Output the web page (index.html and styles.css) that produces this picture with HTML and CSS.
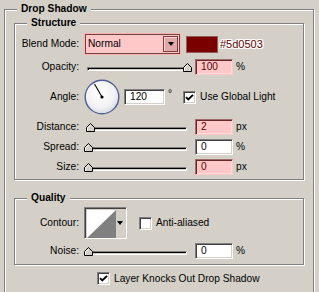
FILE: index.html
```html
<!DOCTYPE html>
<html>
<head>
<meta charset="utf-8">
<link rel="stylesheet" href="styles.css">
</head>
<body>
<div class="page">
  <div class="group outer">
    <span class="legend">Drop Shadow</span>

    <div class="group sub structure">
      <span class="legend">Structure</span>

      <div class="row row-blend">
        <span class="lbl">Blend Mode:</span>
        <div class="select">
          <span class="select-text">Normal</span>
          <span class="select-btn"><i class="arrow"></i></span>
        </div>
        <span class="swatch"></span>
        <span class="hex">#5d0503</span>
      </div>

      <div class="row">
        <span class="lbl">Opacity:</span>
        <div class="slider">
          <div class="track"></div>
          <svg class="thumb" style="left:99px" width="9" height="9" viewBox="0 0 9 9"><path d="M0.5 8.5V4.5L4.5 0.5L8.5 4.5V8.5Z" fill="#d4d0c8" stroke="#000"/><path d="M1.5 8V4.9L4.5 1.9" fill="none" stroke="#fff"/></svg>
        </div>
        <span class="field pink">100</span>
        <span class="unit">%</span>
      </div>

      <div class="row row-angle">
        <span class="lbl">Angle:</span>
        <svg class="dial" width="36" height="36" viewBox="0 0 36 36">
          <defs>
            <radialGradient id="dg" cx="0.45" cy="0.4" r="0.6">
              <stop offset="0" stop-color="#ffffff"/>
              <stop offset="0.7" stop-color="#f2f2f4"/>
              <stop offset="1" stop-color="#d8dae4"/>
            </radialGradient>
          </defs>
          <circle cx="18" cy="18" r="16.8" fill="url(#dg)" stroke="#4d5f94" stroke-width="1.4"/>
          <line x1="18" y1="18" x2="10.5" y2="5" stroke="#000" stroke-width="1.1"/>
          <circle cx="18" cy="18" r="1.6" fill="#000"/>
        </svg>
        <span class="field wide">120</span>
        <span class="deg">°</span>
        <label class="check global">
          <span class="box"><svg width="9" height="9" viewBox="0 0 9 9"><path d="M1 4.2L3.3 6.5L8 1.8" fill="none" stroke="#000" stroke-width="1.9"/></svg></span>
          <span>Use Global Light</span>
        </label>
      </div>

      <div class="row">
        <span class="lbl">Distance:</span>
        <div class="slider">
          <div class="track"></div>
          <svg class="thumb" style="left:2px" width="9" height="9" viewBox="0 0 9 9"><path d="M0.5 8.5V4.5L4.5 0.5L8.5 4.5V8.5Z" fill="#d4d0c8" stroke="#000"/><path d="M1.5 8V4.9L4.5 1.9" fill="none" stroke="#fff"/></svg>
        </div>
        <span class="field pink">2</span>
        <span class="unit">px</span>
      </div>

      <div class="row">
        <span class="lbl">Spread:</span>
        <div class="slider">
          <div class="track"></div>
          <svg class="thumb" style="left:0px" width="9" height="9" viewBox="0 0 9 9"><path d="M0.5 8.5V4.5L4.5 0.5L8.5 4.5V8.5Z" fill="#d4d0c8" stroke="#000"/><path d="M1.5 8V4.9L4.5 1.9" fill="none" stroke="#fff"/></svg>
        </div>
        <span class="field">0</span>
        <span class="unit">%</span>
      </div>

      <div class="row">
        <span class="lbl">Size:</span>
        <div class="slider">
          <div class="track"></div>
          <svg class="thumb" style="left:0px" width="9" height="9" viewBox="0 0 9 9"><path d="M0.5 8.5V4.5L4.5 0.5L8.5 4.5V8.5Z" fill="#d4d0c8" stroke="#000"/><path d="M1.5 8V4.9L4.5 1.9" fill="none" stroke="#fff"/></svg>
        </div>
        <span class="field pink">0</span>
        <span class="unit">px</span>
      </div>
    </div>

    <div class="group sub quality">
      <span class="legend">Quality</span>

      <div class="row row-contour">
        <span class="lbl">Contour:</span>
        <div class="contour">
          <svg class="curve" width="29" height="28" viewBox="0 0 29 28"><rect width="29" height="28" fill="#fff"/><path d="M0 28L29 0V28Z" fill="#808080"/></svg>
          <span class="contour-btn"><i class="arrow"></i></span>
        </div>
        <label class="check anti">
          <span class="box"></span>
          <span>Anti-aliased</span>
        </label>
      </div>

      <div class="row">
        <span class="lbl">Noise:</span>
        <div class="slider">
          <div class="track"></div>
          <svg class="thumb" style="left:0px" width="9" height="9" viewBox="0 0 9 9"><path d="M0.5 8.5V4.5L4.5 0.5L8.5 4.5V8.5Z" fill="#d4d0c8" stroke="#000"/><path d="M1.5 8V4.9L4.5 1.9" fill="none" stroke="#fff"/></svg>
        </div>
        <span class="field">0</span>
        <span class="unit">%</span>
      </div>
    </div>

    <label class="check knock">
      <span class="box"><svg width="9" height="9" viewBox="0 0 9 9"><path d="M1 4.2L3.3 6.5L8 1.8" fill="none" stroke="#000" stroke-width="1.9"/></svg></span>
      <span>Layer Knocks Out Drop Shadow</span>
    </label>
  </div>
</div>
</body>
</html>
```

FILE: styles.css
```css
* { box-sizing: border-box; }
html, body { margin: 0; padding: 0; }
body {
  background: #d4d0c8;
  font-family: "Liberation Sans", Arial, sans-serif;
  font-size: 10.2px;
  line-height: 12px;
  color: #000;
  overflow: hidden;
}
.page {
  height: 292px;
  overflow: hidden;
  padding: 9px 0 0 4px;
}

.group {
  position: relative;
  border: 1px solid #808080;
  box-shadow: inset 1px 1px #fff, 1px 1px #fff;
}
.outer {
  width: 310px;
  height: 300px;
  padding: 13px 0 0 9px;
}
.sub {
  width: 290px;
  display: flex;
  flex-direction: column;
  gap: 4px;
}
.structure { padding: 9px 0 4px 0; }
.quality { margin-top: 18px; padding: 8px 0 5px 0; }

.legend {
  position: absolute;
  left: 12px;
  top: -7px;
  padding: 0 4px;
  background: #d4d0c8;
  font-weight: bold;
  line-height: 12px;
}

.row {
  display: flex;
  align-items: center;
  height: 16px;
}
.row-blend { height: 22px; }
.row-angle { height: 36px; }
.row-contour { height: 32px; }

.lbl {
  width: 64px;
  margin-right: 5px;
  text-align: right;
  flex: none;
}

/* select */
.select {
  display: flex;
  width: 97px;
  height: 22px;
  border: 1px solid #ffb4b4;
  background: #ffc8c8;
  box-shadow: inset 1px 1px #7a3c3c, inset -1px -1px #7a3c3c;
  padding: 2px 2px 2px 3px;
  align-items: center;
}
.select-text { flex: 1; }
.select-btn {
  width: 15px;
  height: 16px;
  border: 1px solid #7a3c3c;
  background: #e0a8a8;
  box-shadow: inset 1px 1px #ffd4d4;
  display: flex;
  align-items: center;
  justify-content: center;
}
.arrow {
  width: 0;
  height: 0;
  border-left: 3.5px solid transparent;
  border-right: 3.5px solid transparent;
  border-top: 4px solid #000;
}
.swatch {
  width: 32px;
  height: 17px;
  margin-left: 5px;
  background: #7a0000;
  border: 1px solid #955c5c;
}
.hex {
  margin-left: 2px;
  font-size: 11px;
  color: #5d0503;
  text-shadow: 1px 0 #fff, -1px 0 #fff, 0 1px #fff, 0 -1px #fff, 1px 1px #fff, -1px -1px #fff, 1px -1px #fff, -1px 1px #fff;
}

/* slider */
.slider {
  position: relative;
  width: 108px;
  height: 16px;
  flex: none;
}
.track {
  margin: 8px 5px 0 3px;
  height: 4px;
  border-top: 1px solid #808080;
  border-left: 1px solid #808080;
  border-bottom: 1px solid #fff;
  border-right: 1px solid #fff;
  background: #d4d0c8;
  box-shadow: inset 1px 1px #000;
}
.thumb {
  position: absolute;
  top: 4px;
  display: block;
}

/* text fields */
.field {
  width: 38px;
  height: 16px;
  margin-left: 3px;
  padding-left: 5px;
  line-height: 14px;
  background: #fff;
  border: 1px solid;
  border-color: #808080 #fff #fff #808080;
  box-shadow: inset 1px 1px #404040, inset -1px -1px #d4d0c8;
  flex: none;
}
.field.pink {
  background: #ffc8c8;
  color: #5a0000;
  border-color: #a06a6a #ffc8c8 #ffc8c8 #a06a6a;
  box-shadow: inset 1px 1px #6a2828, inset -1px -1px #ffd8d8;
}
.field.wide { width: 41px; margin-left: 4px; }
.unit { margin-left: 3px; }
.deg { margin-left: 3px; align-self: flex-start; margin-top: 9px; }

.dial { display: block; flex: none; }

/* checkbox */
.check {
  display: flex;
  align-items: center;
}
.box {
  width: 13px;
  height: 13px;
  margin-right: 4px;
  background: #fff;
  border: 1px solid;
  border-color: #808080 #fff #fff #808080;
  box-shadow: inset 1px 1px #404040, inset -1px -1px #d4d0c8;
  display: flex;
  align-items: center;
  justify-content: center;
  flex: none;
}
.box svg { display: block; }
.global { margin-left: 11px; }
.anti { margin-left: 12px; }
.knock { margin: 7px 0 0 83px; }

/* contour */
.contour {
  display: flex;
  width: 43px;
  height: 32px;
  border: 1px solid;
  border-color: #808080 #fff #fff #808080;
  box-shadow: inset 1px 1px #404040, inset -1px -1px #d4d0c8;
  padding: 2px;
  flex: none;
}
.curve { display: block; flex: none; }
.contour-btn {
  flex: 1;
  background: #d4d0c8;
  display: flex;
  align-items: center;
  justify-content: center;
}
```
